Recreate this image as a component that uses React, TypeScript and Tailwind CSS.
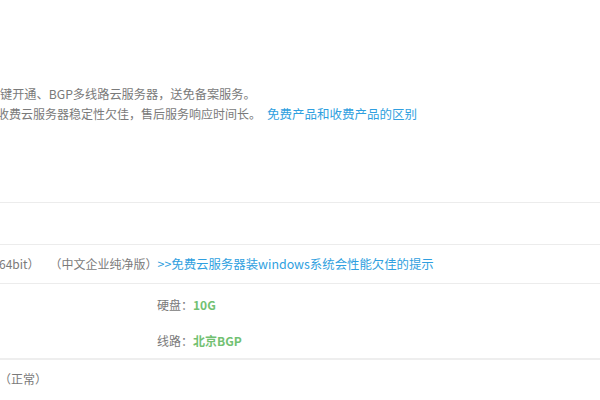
export default function App() {
  return (
    <div
      className="w-[600px] h-[400px] overflow-hidden bg-white text-[12px] text-[#7a7a7a]"
      style={{ fontFamily: '"Noto Sans CJK SC", "Noto Sans", sans-serif' }}
    >
      {/* intro text */}
      <div className="pt-[84px] leading-[20px]">
        <p className="ml-0 whitespace-nowrap text-[12.2px]">键开通、BGP多线路云服务器，送免备案服务。</p>
        <p className="-ml-[3px] whitespace-nowrap">
          收费云服务器稳定性欠佳，售后服务响应时间长。
          <a className="ml-[6px] text-[12.5px] text-[#2f9fe0]">免费产品和收费产品的区别</a>
        </p>
      </div>

      {/* table */}
      <div className="mt-[78px] border-t border-[#ececec]">
        <div className="h-[42px] border-b border-[#ececec]" />

        <div className="flex h-[39px] items-center border-b border-[#ececec] whitespace-nowrap">
          <span className="-ml-[1px]">64bit）</span>
          <span className="ml-[10px]">（中文企业纯净版）</span>
          <a className="text-[12.4px] text-[#2f9fe0]">&gt;&gt;免费云服务器装windows系统会性能欠佳的提示</a>
        </div>

        <div className="flex h-[76px] border-b-2 border-[#eeeeee]">
          <div className="w-[157px]" />
          <div className="flex flex-col pt-[11px] gap-[16px] leading-[20px]">
            <div>
              硬盘：<span className="font-bold text-[#72c172]">10G</span>
            </div>
            <div>
              线路：<span className="font-bold text-[#72c172]">北京BGP</span>
            </div>
          </div>
        </div>

        <div className="flex h-[38px] items-center">
          <span className="-ml-[1px]">（正常）</span>
        </div>
      </div>
    </div>
  )
}
